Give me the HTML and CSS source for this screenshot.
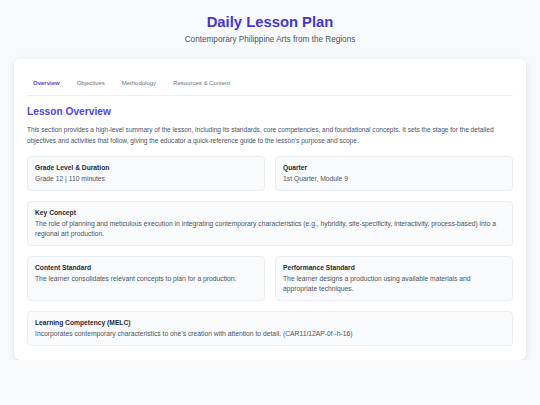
FILE: index.html
```html
<!DOCTYPE html>
<html lang="en">
<head>
<meta charset="utf-8">
<title>Daily Lesson Plan</title>
<link rel="stylesheet" href="styles.css">
</head>
<body>
<header class="page-header">
  <h1 class="title">Daily Lesson Plan</h1>
  <p class="subtitle">Contemporary Philippine Arts from the Regions</p>
</header>
<main class="card">
  <nav class="tabs">
    <span class="tab active">Overview</span>
    <span class="tab">Objectives</span>
    <span class="tab">Methodology</span>
    <span class="tab">Resources &amp; Content</span>
  </nav>
  <h2 class="section-title">Lesson Overview</h2>
  <p class="intro">This section provides a high-level summary of the lesson, including its standards, core competencies, and foundational concepts. It sets the stage for the detailed objectives and activities that follow, giving the educator a quick-reference guide to the lesson's purpose and scope.</p>
  <div class="grid">
    <div class="box">
      <div class="box-title">Grade Level &amp; Duration</div>
      <div class="box-text">Grade 12 | 110 minutes</div>
    </div>
    <div class="box">
      <div class="box-title">Quarter</div>
      <div class="box-text">1st Quarter, Module 9</div>
    </div>
    <div class="box wide">
      <div class="box-title">Key Concept</div>
      <div class="box-text">The role of planning and meticulous execution in integrating contemporary characteristics (e.g., hybridity, site-specificity, interactivity, process-based) into a regional art production.</div>
    </div>
    <div class="box">
      <div class="box-title">Content Standard</div>
      <div class="box-text">The learner consolidates relevant concepts to plan for a production.</div>
    </div>
    <div class="box">
      <div class="box-title">Performance Standard</div>
      <div class="box-text">The learner designs a production using available materials and appropriate techniques.</div>
    </div>
    <div class="box wide">
      <div class="box-title">Learning Competency (MELC)</div>
      <div class="box-text">Incorporates contemporary characteristics to one’s creation with attention to detail. (CAR11/12AP-0f -h-16)</div>
    </div>
  </div>
</main>
</body>
</html>
```
FILE: styles.css
```css
* { box-sizing: border-box; }
html, body { margin: 0; padding: 0; }
body {
  background: #f8f9fb;
  font-family: "Liberation Sans", Arial, sans-serif;
  color: #374151;
  padding: 13px 14px 0;
}
.page-header { text-align: center; }
.title {
  margin: 0;
  font-size: 14.8px;
  line-height: 18px;
  font-weight: 700;
  color: #4338ca;
}
.subtitle {
  margin: 4px 0 0;
  font-size: 8.2px;
  line-height: 10px;
  color: #4b5563;
}
.card {
  margin-top: 14px;
  background: #ffffff;
  border-radius: 6px;
  box-shadow: 0 2px 7px rgba(15, 23, 42, 0.09), 0 1px 2px rgba(15, 23, 42, 0.05);
  padding: 13px 13px 14px;
}
.tabs {
  display: flex;
  gap: 5px;
  border-bottom: 1px solid #eceef2;
}
.tab {
  padding: 6px 6px 7px;
  font-size: 6px;
  line-height: 10px;
  color: #6b7280;
}
.tab.active { color: #4f46e5; font-weight: 700; }
.section-title {
  margin: 9px 0 0;
  font-size: 10.2px;
  line-height: 14px;
  font-weight: 700;
  color: #4f46e5;
}
.intro {
  margin: 5px 0 0;
  font-size: 6.55px;
  line-height: 11px;
  color: #4b5563;
}
.grid {
  margin-top: 10px;
  display: grid;
  grid-template-columns: 1fr 1fr;
  gap: 10px;
}
.box {
  background: #f9fafb;
  border: 1px solid #eceef2;
  border-radius: 4px;
  padding: 6px 7px;
}
.box.wide { grid-column: 1 / -1; }
.box-title {
  font-size: 6.7px;
  line-height: 10px;
  font-weight: 700;
  color: #1f2937;
}
.box-text {
  margin-top: 1px;
  font-size: 6.75px;
  line-height: 10px;
  color: #4b5563;
}
```
